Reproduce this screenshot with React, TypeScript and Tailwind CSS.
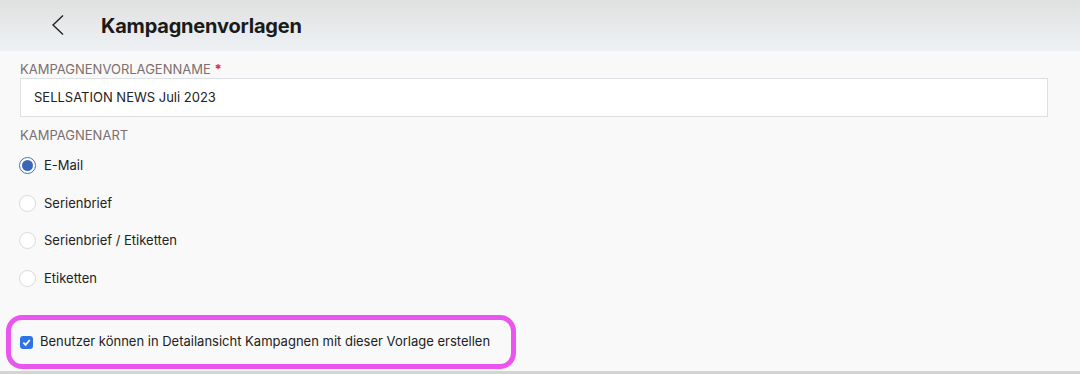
const options = ["E-Mail", "Serienbrief", "Serienbrief / Etiketten", "Etiketten"];

const App = () => {
    return (
        <div className="h-[374px] w-[1080px] overflow-hidden bg-[#f9f9f9] font-['Inter',sans-serif] text-[#222]">
            <header className="flex h-[51px] items-center bg-gradient-to-b from-[#e0e0e0] to-[#eef2f5]">
                <svg
                    className="ml-[50px] mt-[-2px]"
                    width="16"
                    height="22"
                    viewBox="0 0 16 22"
                    fill="none"
                    stroke="#222"
                    strokeWidth="1.4"
                >
                    <path d="M13 1.5 L3 11 L13 20.5" />
                </svg>
                <h1 className="ml-[35px] text-[20px] font-bold tracking-[-0.2px] text-[#1a1a1a]">
                    Kampagnenvorlagen
                </h1>
            </header>
            <div className="px-5">
                <label className="mt-[10px] block text-[13px] leading-[16px] text-[#7b6f6f]">
                    KAMPAGNENVORLAGENNAME{" "}
                    <span className="font-bold text-[#e0302a]">*</span>
                </label>
                <div className="mt-[1px] flex h-[39px] w-[1028px] items-center border border-[#dcdfe3] bg-white px-[13px] text-[13px]">
                    SELLSATION NEWS Juli 2023
                </div>
                <div className="mt-[10px] text-[13px] leading-[16px] text-[#7b6f6f]">
                    KAMPAGNENART
                </div>
                <div className="mt-[4px] flex flex-col">
                    {options.map((opt, i) => (
                        <div key={opt} className="flex h-[37.5px] items-center">
                            {i === 0 ? (
                                <span className="ml-[-1px] flex h-[17px] w-[17px] items-center justify-center rounded-full border border-[#3d6fc6] bg-white">
                                    <span className="h-[11px] w-[11px] rounded-full bg-[#3a66b8]" />
                                </span>
                            ) : (
                                <span className="ml-[-1px] h-[17px] w-[17px] rounded-full border border-[#d9d9d9] bg-white" />
                            )}
                            <span className="ml-[8px] text-[13px]">{opt}</span>
                        </div>
                    ))}
                </div>
            </div>
            <div className="ml-[6px] mt-[18px] flex h-[54px] w-[510px] items-center rounded-[16px] border-[5px] border-[#eb55ef] pl-[9px]">
                <span className="flex h-[13px] w-[13px] items-center justify-center rounded-[3px] bg-[#2f74e6]">
                    <svg width="9" height="9" viewBox="0 0 10 10" fill="none" stroke="white" strokeWidth="2">
                        <path d="M1.5 5.2 L4 7.6 L8.6 2.2" />
                    </svg>
                </span>
                <span className="ml-[7px] text-[13px]">
                    Benutzer können in Detailansicht Kampagnen mit dieser Vorlage erstellen
                </span>
            </div>
            <div className="mt-[2px] h-[3px] w-full bg-[#d4d4d4]" />
        </div>
    );
};

export default App;
